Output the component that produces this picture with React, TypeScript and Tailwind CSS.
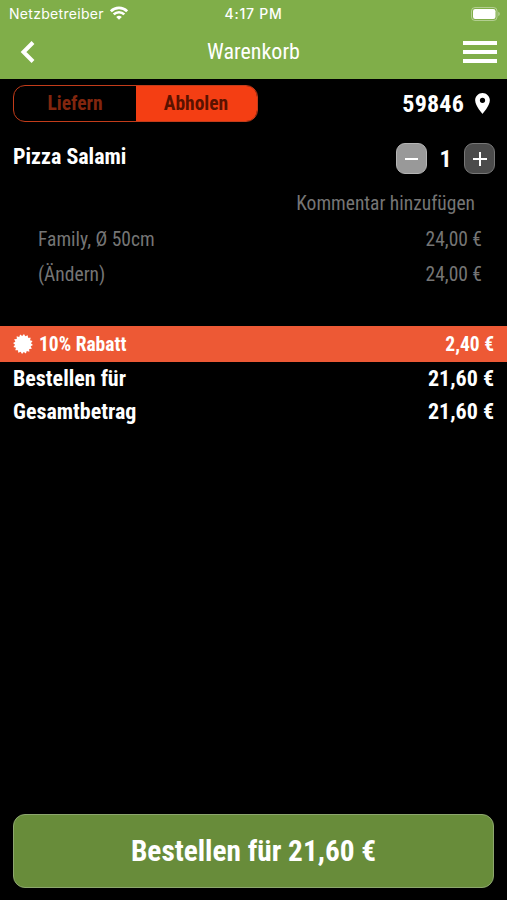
import { useState } from "react";
import clsx from "clsx";

const currency = (value: number) => `${value.toFixed(2).replace(".", ",")} €`;

const options = [
  { label: "Family, Ø 50cm", price: 24 },
  { label: "(Ändern)", price: 24 },
];

function WifiIcon() {
  return (
    <svg viewBox="0 0 18 14" className="mb-[2px] h-[14px] w-[18px]" fill="none" stroke="white" strokeWidth="2.6" aria-hidden>
      <path d="M.9 5.3a11.4 11.4 0 0 1 16.2 0M3.7 8.4a7.5 7.5 0 0 1 10.6 0" />
      <path d="M9 13.8 6.2 11a4 4 0 0 1 5.6 0Z" fill="white" stroke="none" />
    </svg>
  );
}

function BatteryIcon() {
  return (
    <svg viewBox="0 0 30 14" className="h-[14px] w-[30px]" aria-hidden>
      <rect x=".5" y=".5" width="25.5" height="13" rx="3.5" fill="none" stroke="white" strokeOpacity=".4" />
      <rect x="2" y="2" width="22.5" height="10" rx="2.2" fill="white" />
      <path d="M27.3 4.8a2.4 2.4 0 0 1 0 4.4Z" fill="white" fillOpacity=".45" />
    </svg>
  );
}

function PinIcon() {
  return (
    <svg viewBox="5 2 14 20" className="mb-px h-[21px] w-[15px]" fill="white" aria-hidden>
      <path d="M12 2C8.13 2 5 5.13 5 9c0 5.25 7 13 7 13s7-7.75 7-13c0-3.87-3.13-7-7-7zm0 9.5a2.5 2.5 0 1 1 0-5 2.5 2.5 0 0 1 0 5z" />
    </svg>
  );
}

// 16-pointed seal
const sealPoints = Array.from({ length: 32 }, (_, i) => {
  const r = i % 2 ? 8 : 10;
  const a = ((i + 0.5) * Math.PI) / 16;
  return `${(10 + r * Math.cos(a)).toFixed(2)},${(10 + r * Math.sin(a)).toFixed(2)}`;
}).join(" ");

function SealIcon() {
  return (
    <svg viewBox="0 0 20 20" className="mb-[2px] size-5" fill="white" aria-hidden>
      <polygon points={sealPoints} />
    </svg>
  );
}

function TotalRow({ label, value }: { label: string; value: number }) {
  return (
    <div className="flex h-[33px] items-center justify-between px-[13px] text-[22px] font-bold">
      <span>{label}</span>
      <span>{currency(value)}</span>
    </div>
  );
}

export default function App() {
  const [mode, setMode] = useState<"deliver" | "pickup">("pickup");
  const [count, setCount] = useState(1);

  return (
    <div className="flex h-[900px] w-[507px] flex-col overflow-hidden bg-black font-['Roboto_Condensed','Roboto',sans-serif] leading-none whitespace-nowrap text-white [font-stretch:75%]">
      <header className="h-[79px] bg-[#80ae49]">
        <div className="grid h-[27px] grid-cols-[1fr_auto_1fr] items-center px-[6px] font-['Inter',sans-serif] text-[14px] [font-stretch:100%]">
          <div className="flex items-center gap-[6px] pl-[3px]">
            <span className="tracking-[0.3px]">Netzbetreiber</span>
            <WifiIcon />
          </div>
          <span className="font-medium tracking-[0.75px]">4:17 PM</span>
          <div className="flex justify-end">
            <BatteryIcon />
          </div>
        </div>
        <div className="grid h-[49px] grid-cols-[1fr_auto_1fr] items-center px-[10px]">
          <button type="button" aria-label="Zurück" className="pl-[10px]">
            <svg viewBox="0 0 15 22" className="h-[22px] w-[15px]" fill="none" stroke="white" strokeWidth="4" aria-hidden>
              <path d="M13 1.5 3.5 11l9.5 9.5" />
            </svg>
          </button>
          <h1 className="text-[22px]">Warenkorb</h1>
          <button type="button" aria-label="Menü" className="flex flex-col items-end gap-[5px]">
            <span className="h-1 w-[34px] bg-white" />
            <span className="h-1 w-[34px] bg-white" />
            <span className="h-1 w-[34px] bg-white" />
          </button>
        </div>
      </header>

      <div className="flex h-[49px] items-center justify-between pr-[17px] pl-[13px]">
        <div className="flex h-[37px] w-[245px] overflow-hidden rounded-[12px] border border-[#c33c1a] text-[19.5px] font-bold">
          <button
            type="button"
            onClick={() => setMode("deliver")}
            className={clsx("w-[122px] pt-px", mode === "deliver" ? "bg-[#f43e13] text-[#5a1200]" : "text-[#82260e]")}
          >
            Liefern
          </button>
          <button
            type="button"
            onClick={() => setMode("pickup")}
            className={clsx("w-[121px] pt-px pr-px", mode === "pickup" ? "bg-[#f43e13] text-[#5a1200]" : "text-[#82260e]")}
          >
            Abholen
          </button>
        </div>
        <div className="flex items-center gap-[11px] text-[24px] font-bold">
          <span className="tracking-[0.2px]">59846</span>
          <PinIcon />
        </div>
      </div>

      <section className="h-[198px] pt-[15px]">
        <div className="flex h-[31px] items-center justify-between pr-[12px] pl-[13px] font-bold">
          <h2 className="pb-[3px] text-[22px]">Pizza Salami</h2>
          <div className="flex items-center text-[24px]">
            <button
              type="button"
              aria-label="Weniger"
              onClick={() => setCount((c) => Math.max(1, c - 1))}
              className="grid size-[31px] place-items-center rounded-[9px] border border-[#b5b5b5] bg-[#999]"
            >
              <span className="h-[2px] w-[13px] bg-white" />
            </button>
            <span className="w-[37px] text-center">{count}</span>
            <button
              type="button"
              aria-label="Mehr"
              onClick={() => setCount((c) => c + 1)}
              className="grid size-[31px] place-items-center rounded-[9px] border border-[#777] bg-[#4b4b4b]"
            >
              <svg viewBox="0 0 14 14" className="size-[14px]" stroke="white" strokeWidth="2" aria-hidden>
                <path d="M7 0v14M0 7h14" />
              </svg>
            </button>
          </div>
        </div>
        <div className="flex h-[56px] items-center justify-end pt-[3px] pr-8 text-[19.5px] text-[#757575]">
          Kommentar hinzufügen
        </div>
        {options.map((o) => (
          <div key={o.label} className="flex h-[35px] items-start justify-between pr-[25px] pl-[38px] text-[19.5px] text-[#757575]">
            <span>{o.label}</span>
            <span>{currency(o.price)}</span>
          </div>
        ))}
      </section>

      <section>
        <div className="flex h-[36px] items-center bg-[#ed5935] px-[13px] pt-px text-[19.5px] font-bold">
          <SealIcon />
          <span className="ml-[6px]">10% Rabatt</span>
          <span className="ml-auto">{currency(2.4)}</span>
        </div>
        <TotalRow label="Bestellen für" value={21.6} />
        <TotalRow label="Gesamtbetrag" value={21.6} />
      </section>

      <button
        type="button"
        className="mx-[13px] mt-auto mb-[12px] h-[74px] rounded-[12px] border border-[#8da66e] bg-[#688c3a] pt-[2px] text-[29.3px] font-bold"
      >
        Bestellen für {currency(21.6)}
      </button>
    </div>
  );
}
